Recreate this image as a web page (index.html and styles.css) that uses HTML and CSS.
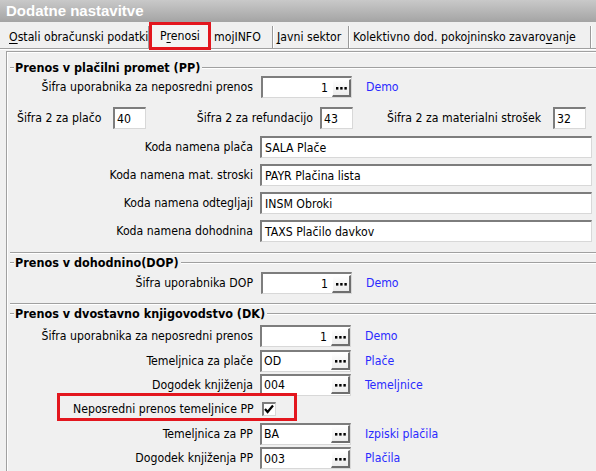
FILE: index.html
```html
<!DOCTYPE html>
<html lang="sl">
<head>
<meta charset="utf-8">
<title>Dodatne nastavitve</title>
<link rel="stylesheet" href="styles.css">
</head>
<body>
<div class="window">
  <div class="titlebar">Dodatne nastavitve</div>
  <div class="tabs">
    <div class="tab t1"><u>O</u>stali obračunski podatki</div>
    <div class="tab sel">P<u>r</u>enosi</div>
    <div class="tab t3">mojINFO</div>
    <div class="tab t4"><u>J</u>avni sektor</div>
    <div class="tab t5">Kolektivno dod. pokojninsko zavaro<u>v</u>anje</div>
  </div>
  <div class="panel">
    <section class="group g1">
      <div class="gtitle"><span>Prenos v plačilni promet (PP)</span></div>
      <div class="row r1">
        <label class="lbl">Šifra uporabnika za neposredni prenos</label>
        <div class="field pick num"><span class="val">1</span><span class="btn"><svg viewBox="0 0 11 3" width="11" height="3"><rect x="0" y="0" width="2.4" height="2.6"/><rect x="4.2" y="0" width="2.4" height="2.6"/><rect x="8.4" y="0" width="2.4" height="2.6"/></svg></span></div>
        <span class="link">Demo</span>
      </div>
      <div class="row r2">
        <label class="lbl2 a">Šifra 2 za plačo</label>
        <div class="field small">40</div>
        <label class="lbl2 b">Šifra 2 za refundacijo</label>
        <div class="field small">43</div>
        <label class="lbl2 c">Šifra 2 za materialni strošek</label>
        <div class="field small">32</div>
      </div>
      <div class="row koda first">
        <label class="lbl">Koda namena plača</label>
        <div class="field wide">SALA Plače</div>
      </div>
      <div class="row koda">
        <label class="lbl">Koda namena mat. stroski</label>
        <div class="field wide">PAYR Plačina lista</div>
      </div>
      <div class="row koda">
        <label class="lbl">Koda namena odtegljaji</label>
        <div class="field wide">INSM Obroki</div>
      </div>
      <div class="row koda">
        <label class="lbl">Koda namena dohodnina</label>
        <div class="field wide">TAXS Plačilo davkov</div>
      </div>
    </section>

    <section class="group g2">
      <div class="gtitle"><span>Prenos v dohodnino(DOP)</span></div>
      <div class="row r1">
        <label class="lbl">Šifra uporabnika DOP</label>
        <div class="field pick num"><span class="val">1</span><span class="btn"><svg viewBox="0 0 11 3" width="11" height="3"><rect x="0" y="0" width="2.4" height="2.6"/><rect x="4.2" y="0" width="2.4" height="2.6"/><rect x="8.4" y="0" width="2.4" height="2.6"/></svg></span></div>
        <span class="link">Demo</span>
      </div>
    </section>

    <section class="group g3">
      <div class="gtitle"><span>Prenos v dvostavno knjigovodstvo (DK)</span></div>
      <div class="row dk">
        <label class="lbl">Šifra uporabnika za neposredni prenos</label>
        <div class="field pick num"><span class="val">1</span><span class="btn"><svg viewBox="0 0 11 3" width="11" height="3"><rect x="0" y="0" width="2.4" height="2.6"/><rect x="4.2" y="0" width="2.4" height="2.6"/><rect x="8.4" y="0" width="2.4" height="2.6"/></svg></span></div>
        <span class="link">Demo</span>
      </div>
      <div class="row dk">
        <label class="lbl">Temeljnica za plače</label>
        <div class="field pick"><span class="val">OD</span><span class="btn"><svg viewBox="0 0 11 3" width="11" height="3"><rect x="0" y="0" width="2.4" height="2.6"/><rect x="4.2" y="0" width="2.4" height="2.6"/><rect x="8.4" y="0" width="2.4" height="2.6"/></svg></span></div>
        <span class="link">Plače</span>
      </div>
      <div class="row dk">
        <label class="lbl">Dogodek knjiženja</label>
        <div class="field pick"><span class="val">004</span><span class="btn"><svg viewBox="0 0 11 3" width="11" height="3"><rect x="0" y="0" width="2.4" height="2.6"/><rect x="4.2" y="0" width="2.4" height="2.6"/><rect x="8.4" y="0" width="2.4" height="2.6"/></svg></span></div>
        <span class="link">Temeljnice</span>
      </div>
      <div class="row dk">
        <div class="mark">
          <label class="chk-lbl">Neposredni prenos temeljnice PP</label>
          <span class="check"><svg viewBox="0 0 10 10" width="10" height="10"><path d="M1 5 L3.6 8 L9 1.5" fill="none" stroke="#000" stroke-width="2.2"/></svg></span>
        </div>
      </div>
      <div class="row dk">
        <label class="lbl">Temeljnica za PP</label>
        <div class="field pick"><span class="val">BA</span><span class="btn"><svg viewBox="0 0 11 3" width="11" height="3"><rect x="0" y="0" width="2.4" height="2.6"/><rect x="4.2" y="0" width="2.4" height="2.6"/><rect x="8.4" y="0" width="2.4" height="2.6"/></svg></span></div>
        <span class="link">Izpiski plačila</span>
      </div>
      <div class="row dk">
        <label class="lbl">Dogodek knjiženja PP</label>
        <div class="field pick"><span class="val">003</span><span class="btn"><svg viewBox="0 0 11 3" width="11" height="3"><rect x="0" y="0" width="2.4" height="2.6"/><rect x="4.2" y="0" width="2.4" height="2.6"/><rect x="8.4" y="0" width="2.4" height="2.6"/></svg></span></div>
        <span class="link">Plačila</span>
      </div>
    </section>
  </div>
</div>
</body>
</html>
```

FILE: styles.css
```css
html, body {
  margin: 0;
  padding: 0;
  background: #f0f0f0;
}
body {
  width: 596px;
  height: 471px;
  overflow: hidden;
  font-family: "DejaVu Sans Condensed", "DejaVu Sans", sans-serif;
  font-stretch: condensed;
  font-size: 12.2px;
  color: #000;
}
.window {
  width: 596px;
}
.titlebar {
  height: 22px;
  line-height: 22px;
  padding-left: 6px;
  background: linear-gradient(#c9c9c9, #a4a4a4);
  color: #fff;
  font-family: "Liberation Sans", Arial, sans-serif;
  font-stretch: normal;
  font-weight: bold;
  font-size: 15px;
}
.tabs {
  display: flex;
  margin-top: 4px;
  height: 22px;
  padding-left: 4px;
  border-bottom: 1px solid #a0a0a0;
  box-shadow: 0 1px 0 #fff;
}
.tab {
  box-sizing: border-box;
  line-height: 22px;
  border-right: 1px solid #9a9a9a;
  box-shadow: 1px 0 0 #fff;
  margin-right: 2px;
  white-space: nowrap;
  overflow: hidden;
}
.t1 { width: 145px; padding-left: 5px; }
.t3 { width: 62px; padding-left: 3px; }
.t4 { width: 74px; padding-left: 2px; }
.t5 { width: 240px; padding-left: 2px; }
.tab u {
  text-decoration-thickness: 1px;
  text-underline-offset: 2px;
}
.tab.sel {
  width: 58px;
  text-align: center;
  background: #f4f4f4;
  margin-top: -2px;
  line-height: 24px;
  outline: 3px solid #e3161e;
  outline-offset: -1px;
  border-left: 1px solid #fff;
}
.panel {
  margin-top: 2px;
  margin-left: 6px;
  border-top: 1px solid #a0a0a0;
  border-left: 1px solid #a0a0a0;
  box-shadow: inset 1px 1px 0 #fff;
  padding-left: 3px;
  height: 420px;
}
.group {
  border-bottom: 1px solid #a0a0a0;
  box-shadow: 0 1px 0 #fff;
}
.g1 { margin-top: 8px; padding-bottom: 9px; }
.g2 { margin-top: 2px; padding-bottom: 8px; }
.g3 { margin-top: 2px; border-bottom: 0; box-shadow: none; }

.gtitle {
  display: flex;
  align-items: center;
  height: 15px;
  font-weight: bold;
  font-size: 12.5px;
}
.gtitle::before,
.gtitle::after {
  content: "";
  height: 1px;
  background: #a0a0a0;
  box-shadow: 0 1px 0 #fff;
}
.gtitle::before { width: 4px; margin-right: 1px; }
.gtitle::after { flex: 1; margin-left: 2px; }
.gtitle span { white-space: nowrap; }

.row {
  display: flex;
  align-items: center;
  height: 24px;
}
.g2 .r1 { margin-top: 1px; }
.r2 { margin-top: 7px; }
.koda { margin-top: 4px; }
.koda.first { margin-top: 5px; }
.g3 .dk { height: 24.4px; }
.g3 .gtitle + .dk { margin-top: 3px; }

.lbl {
  width: 243px;
  text-align: right;
  margin-right: 7px;
  white-space: nowrap;
}
.lbl2 { white-space: nowrap; }
.lbl2.a { margin-left: 7px; width: 96px; }
.lbl2.b { width: 167px; margin-right: 7px; text-align: right; }
.lbl2.c { width: 188px; margin-right: 12px; text-align: right; }

.field {
  box-sizing: border-box;
  height: 22px;
  background: #fff;
  border-top: 2px solid #7d7d7d;
  border-left: 2px solid #7d7d7d;
  border-right: 1px solid #d8d8d8;
  border-bottom: 1px solid #d8d8d8;
  display: flex;
  align-items: center;
  padding-left: 2px;
  white-space: nowrap;
}
.small { width: 33px; }
.wide { width: 332px; padding-left: 3px; }
.pick { width: 91px; padding-left: 2px; padding-right: 0; }
.g1 .pick, .g2 .pick { margin-left: 1px; }
.pick .val { flex: 1; }
.num .val { text-align: right; padding-right: 4px; }
.btn {
  box-sizing: border-box;
  width: 19px;
  height: 18px;
  background: linear-gradient(#ffffff, #ececec);
  border-top: 1px solid #fff;
  border-left: 1px solid #fff;
  border-right: 2px solid #6e6e6e;
  border-bottom: 2px solid #6e6e6e;
  display: flex;
  align-items: center;
  justify-content: center;
  padding-top: 2px;
}
.btn svg { display: block; fill: #000; }
.link {
  color: #2a2aff;
  margin-left: 14px;
  white-space: nowrap;
}
.mark {
  box-sizing: border-box;
  display: flex;
  align-items: center;
  align-self: flex-start;
  margin-top: -1px;
  height: 22px;
  padding-top: 3px;
  outline: 3px solid #e3161e;
  margin-left: 50px;
  padding-left: 13px;
  padding-right: 18px;
}
.chk-lbl {
  white-space: nowrap;
  margin-right: 8px;
}
.check {
  box-sizing: border-box;
  width: 14px;
  height: 14px;
  background: #fff;
  border-top: 2px solid #7d7d7d;
  border-left: 2px solid #7d7d7d;
  border-right: 1px solid #d8d8d8;
  border-bottom: 1px solid #d8d8d8;
  display: flex;
  align-items: center;
  justify-content: center;
}
```
